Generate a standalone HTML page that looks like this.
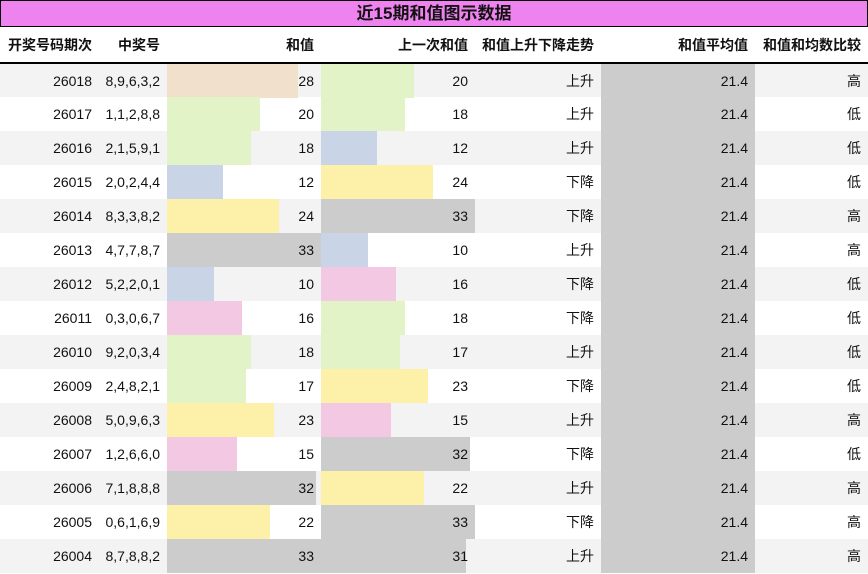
<!DOCTYPE html>
<html><head><meta charset="utf-8"><style>
*{margin:0;padding:0;box-sizing:border-box}
body{width:868px;height:574px;background:#fff;font-family:"Liberation Sans","Noto Sans CJK SC",sans-serif;font-size:14px;color:#111;position:relative;overflow:hidden}
.title{position:absolute;left:0;top:0;width:868px;height:27px;background:#ee82ee;border:1px solid #000;text-align:center;font-weight:bold;font-size:17px;line-height:25px}
table{position:absolute;left:0;top:27px;border-collapse:collapse;table-layout:fixed}
td,th{height:34px;text-align:right;padding:0 7px 0 0;white-space:nowrap;position:relative}
th{height:36px;border-bottom:2px solid #000;font-weight:bold}
tr.g td{background:#f3f3f3}
td.av{background:#ccc!important}
.b{position:absolute;left:0;top:0;height:34px}
td span{position:relative}
.c1{background:#f0e0cc}.c2{background:#e3f3c8}.c3{background:#c9d5e6}.c4{background:#fdf0a8}.c5{background:#f3c8e3}.c6{background:#cccccc}
</style></head><body>
<div class="title">近15期和值图示数据</div>
<table>
<colgroup><col style="width:99px"><col style="width:68px"><col style="width:154px"><col style="width:154px"><col style="width:126px"><col style="width:154px"><col style="width:113px"></colgroup>
<tr><th>开奖号码期次</th><th>中奖号</th><th>和值</th><th>上一次和值</th><th>和值上升下降走势</th><th>和值平均值</th><th>和值和均数比较</th></tr>
<tr class="g"><td>26018</td><td>8,9,6,3,2</td><td><div class="b c1" style="width:131px"></div><span>28</span></td><td><div class="b c2" style="width:93px"></div><span>20</span></td><td>上升</td><td class="av">21.4</td><td>高</td></tr>
<tr><td>26017</td><td>1,1,2,8,8</td><td><div class="b c2" style="width:93px"></div><span>20</span></td><td><div class="b c2" style="width:84px"></div><span>18</span></td><td>上升</td><td class="av">21.4</td><td>低</td></tr>
<tr class="g"><td>26016</td><td>2,1,5,9,1</td><td><div class="b c2" style="width:84px"></div><span>18</span></td><td><div class="b c3" style="width:56px"></div><span>12</span></td><td>上升</td><td class="av">21.4</td><td>低</td></tr>
<tr><td>26015</td><td>2,0,2,4,4</td><td><div class="b c3" style="width:56px"></div><span>12</span></td><td><div class="b c4" style="width:112px"></div><span>24</span></td><td>下降</td><td class="av">21.4</td><td>低</td></tr>
<tr class="g"><td>26014</td><td>8,3,3,8,2</td><td><div class="b c4" style="width:112px"></div><span>24</span></td><td><div class="b c6" style="width:154px"></div><span>33</span></td><td>下降</td><td class="av">21.4</td><td>高</td></tr>
<tr><td>26013</td><td>4,7,7,8,7</td><td><div class="b c6" style="width:154px"></div><span>33</span></td><td><div class="b c3" style="width:47px"></div><span>10</span></td><td>上升</td><td class="av">21.4</td><td>高</td></tr>
<tr class="g"><td>26012</td><td>5,2,2,0,1</td><td><div class="b c3" style="width:47px"></div><span>10</span></td><td><div class="b c5" style="width:75px"></div><span>16</span></td><td>下降</td><td class="av">21.4</td><td>低</td></tr>
<tr><td>26011</td><td>0,3,0,6,7</td><td><div class="b c5" style="width:75px"></div><span>16</span></td><td><div class="b c2" style="width:84px"></div><span>18</span></td><td>下降</td><td class="av">21.4</td><td>低</td></tr>
<tr class="g"><td>26010</td><td>9,2,0,3,4</td><td><div class="b c2" style="width:84px"></div><span>18</span></td><td><div class="b c2" style="width:79px"></div><span>17</span></td><td>上升</td><td class="av">21.4</td><td>低</td></tr>
<tr><td>26009</td><td>2,4,8,2,1</td><td><div class="b c2" style="width:79px"></div><span>17</span></td><td><div class="b c4" style="width:107px"></div><span>23</span></td><td>下降</td><td class="av">21.4</td><td>低</td></tr>
<tr class="g"><td>26008</td><td>5,0,9,6,3</td><td><div class="b c4" style="width:107px"></div><span>23</span></td><td><div class="b c5" style="width:70px"></div><span>15</span></td><td>上升</td><td class="av">21.4</td><td>高</td></tr>
<tr><td>26007</td><td>1,2,6,6,0</td><td><div class="b c5" style="width:70px"></div><span>15</span></td><td><div class="b c6" style="width:149px"></div><span>32</span></td><td>下降</td><td class="av">21.4</td><td>低</td></tr>
<tr class="g"><td>26006</td><td>7,1,8,8,8</td><td><div class="b c6" style="width:149px"></div><span>32</span></td><td><div class="b c4" style="width:103px"></div><span>22</span></td><td>上升</td><td class="av">21.4</td><td>高</td></tr>
<tr><td>26005</td><td>0,6,1,6,9</td><td><div class="b c4" style="width:103px"></div><span>22</span></td><td><div class="b c6" style="width:154px"></div><span>33</span></td><td>下降</td><td class="av">21.4</td><td>高</td></tr>
<tr class="g"><td>26004</td><td>8,7,8,8,2</td><td><div class="b c6" style="width:154px"></div><span>33</span></td><td><div class="b c6" style="width:145px"></div><span>31</span></td><td>上升</td><td class="av">21.4</td><td>高</td></tr>
</table>
</body></html>
